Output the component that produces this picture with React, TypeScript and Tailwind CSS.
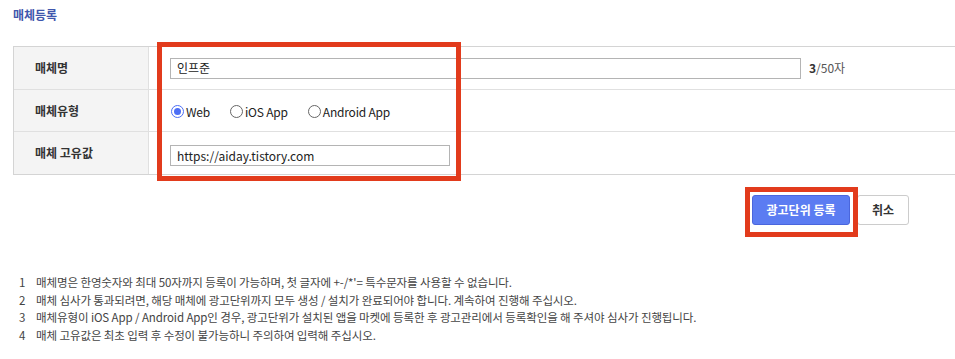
import React from "react";

const FONT = { fontFamily: '"Noto Sans CJK KR", "Noto Sans", sans-serif' };

const NOTES = [
  "매체명은 한영숫자와 최대 50자까지 등록이 가능하며, 첫 글자에 +-/*'= 특수문자를 사용할 수 없습니다.",
  "매체 심사가 통과되려면, 해당 매체에 광고단위까지 모두 생성 / 설치가 완료되어야 합니다. 계속하여 진행해 주십시오.",
  "매체유형이 iOS App / Android App인 경우, 광고단위가 설치된 앱을 마켓에 등록한 후 광고관리에서 등록확인을 해 주셔야 심사가 진행됩니다.",
  "매체 고유값은 최초 입력 후 수정이 불가능하니 주의하여 입력해 주십시오.",
];

function Radio({ label, checked }: { label: string; checked?: boolean }) {
  return (
    <label className="flex items-center gap-[2px]">
      {checked ? (
        <span className="flex h-[13px] w-[13px] items-center justify-center rounded-full border border-[#4c6ef5] bg-white">
          <span className="h-[7px] w-[7px] rounded-full bg-[#4c6ef5]" />
        </span>
      ) : (
        <span className="h-[13px] w-[13px] rounded-full border border-[#666] bg-white" />
      )}
      <span className="text-[12px] tracking-[-0.2px] text-[#222]">{label}</span>
    </label>
  );
}

export default function App() {
  return (
    <div className="relative h-[359px] w-[955px] overflow-hidden bg-white pl-[13px]" style={FONT}>
      {/* Title */}
      <h2 className="pt-[7px] text-[12px] font-bold leading-[16px] text-[#3f56ad]">매체등록</h2>

      {/* Form table */}
      <div className="mt-[23px] border-t border-l border-[#d4d4d4] border-b">
        <div className="flex h-[43px] border-b border-[#e0e0e0]">
          <div className="flex w-[135px] shrink-0 items-center border-r border-[#e0e0e0] bg-[#f4f4f4] pl-[21px] text-[12px] font-bold text-[#333]">
            매체명
          </div>
          <div className="flex items-center pl-[21px]">
            <div className="flex h-[21px] w-[631px] items-center border border-[#b4b4b4] px-[6px] text-[12px] text-[#222]">
              인프준
            </div>
            <span className="ml-[8px] text-[12px] text-[#555]">
              <b className="text-[#333]">3</b>/50자
            </span>
          </div>
        </div>
        <div className="flex h-[42px] border-b border-[#e0e0e0]">
          <div className="flex w-[135px] shrink-0 items-center border-r border-[#e0e0e0] bg-[#f4f4f4] pl-[21px] text-[12px] font-bold text-[#333]">
            매체유형
          </div>
          <div className="flex items-center gap-[20px] pl-[22px] pt-[2px]">
            <Radio label="Web" checked />
            <Radio label="iOS App" />
            <Radio label="Android App" />
          </div>
        </div>
        <div className="flex h-[42px]">
          <div className="flex w-[135px] shrink-0 items-center border-r border-[#e0e0e0] bg-[#f4f4f4] pl-[21px] text-[12px] font-bold text-[#333]">
            매체 고유값
          </div>
          <div className="flex items-center pl-[21px] pt-[5px]">
            <div className="flex h-[21px] w-[280px] items-center border border-[#b4b4b4] px-[6px] text-[12px] text-[#222]">
              https://aiday.tistory.com
            </div>
          </div>
        </div>
      </div>

      {/* Buttons */}
      <div className="mt-[20px] flex justify-end gap-[7px] pr-[46px]">
        <button className="h-[30px] w-[98px] rounded-[3px] border border-[#4a66dd] bg-[#5b7cf2] text-[12px] font-bold text-white">
          광고단위 등록
        </button>
        <button className="h-[30px] w-[52px] rounded-[3px] border border-[#cccccc] bg-white text-[12px] font-bold text-[#333]">
          취소
        </button>
      </div>

      {/* Notes */}
      <ol className="mt-[49px] flex flex-col pl-[6px]">
        {NOTES.map((n, i) => (
          <li key={i} className="flex h-[17.5px] items-center text-[11.5px] tracking-[-0.1px] text-[#444]">
            <span className="w-[17px]">{i + 1}</span>
            <span>{n}</span>
          </li>
        ))}
      </ol>

      {/* Highlight boxes */}
      <div className="pointer-events-none absolute left-[157px] top-[42px] h-[139px] w-[304px] border-[5px] border-[#e23b1c]" />
      <div className="pointer-events-none absolute left-[745px] top-[187px] h-[50px] w-[113px] border-[5px] border-[#e23b1c]" />
    </div>
  );
}
